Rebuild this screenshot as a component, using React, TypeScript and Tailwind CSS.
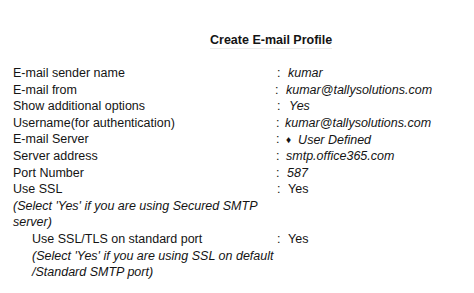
import React from "react";

type Row = {
  label: string;
  value?: React.ReactNode;
  italicValue?: boolean;
  indent?: boolean;
  help?: boolean;
  colonCls?: string;
  valueCls?: string;
};

const rows: Row[] = [
  { label: "E-mail sender name", value: "kumar", italicValue: true, colonCls: "pl-[2px]", valueCls: "pl-[2px]" },
  { label: "E-mail from", value: "kumar@tallysolutions.com", italicValue: true, colonCls: "pl-[0px]" },
  { label: "Show additional options", value: "Yes", italicValue: true, colonCls: "pl-[2px]", valueCls: "pl-[3px]" },
  { label: "Username(for authentication)", value: "kumar@tallysolutions.com", italicValue: true, colonCls: "pl-[1px]", valueCls: "-ml-[1px]" },
  {
    label: "E-mail Server",
    value: (
      <span className="inline-flex items-center">
        <span className="text-[10px] leading-none mr-[7px]">♦</span>
        <span>User Defined</span>
      </span>
    ),
    italicValue: true,
    colonCls: "pl-[1px]",
  },
  { label: "Server address", value: "smtp.office365.com", italicValue: true, colonCls: "pl-[1px]" },
  { label: "Port Number", value: "587", italicValue: true, colonCls: "pl-[1px]", valueCls: "pl-[1px]" },
  { label: "Use SSL", value: "Yes", colonCls: "pl-[2px]", valueCls: "pl-[2px]" },
  { label: "(Select 'Yes' if you are using Secured SMTP", help: true },
  { label: "server)", help: true },
  { label: "Use SSL/TLS on standard port", value: "Yes", indent: true, colonCls: "pl-[2px]", valueCls: "pl-[2px]" },
  { label: "(Select 'Yes' if you are using SSL on default", help: true, indent: true },
  { label: "/Standard SMTP port)", help: true, indent: true },
];

export default function App() {
  return (
    <div className="w-[474px] h-[293px] bg-white text-[#141414] font-['Liberation_Sans',Arial,sans-serif] overflow-hidden relative">
      <div className="pt-[27px] pl-[210px]">
        <div className="inline-block text-[12.5px] leading-[16px] font-bold border-b border-[#ececec]">
          Create E-mail Profile
        </div>
      </div>
      <div className="mt-[14px] text-[12.5px] leading-[16.6px]">
        {rows.map((r, i) => (
          <div key={i} className="flex h-[16.6px] whitespace-nowrap">
            <div
              className={`w-[275px] ${r.indent ? "pl-[32px]" : "pl-[13px]"} ${r.help ? "italic" : ""}`}
            >
              {r.label}
            </div>
            {r.value !== undefined && (
              <>
                <div className={`w-[11px] ${r.colonCls ?? ""}`}>:</div>
                <div className={`${r.italicValue ? "italic" : ""} ${r.valueCls ?? ""}`}>{r.value}</div>
              </>
            )}
          </div>
        ))}
      </div>
    </div>
  );
}
